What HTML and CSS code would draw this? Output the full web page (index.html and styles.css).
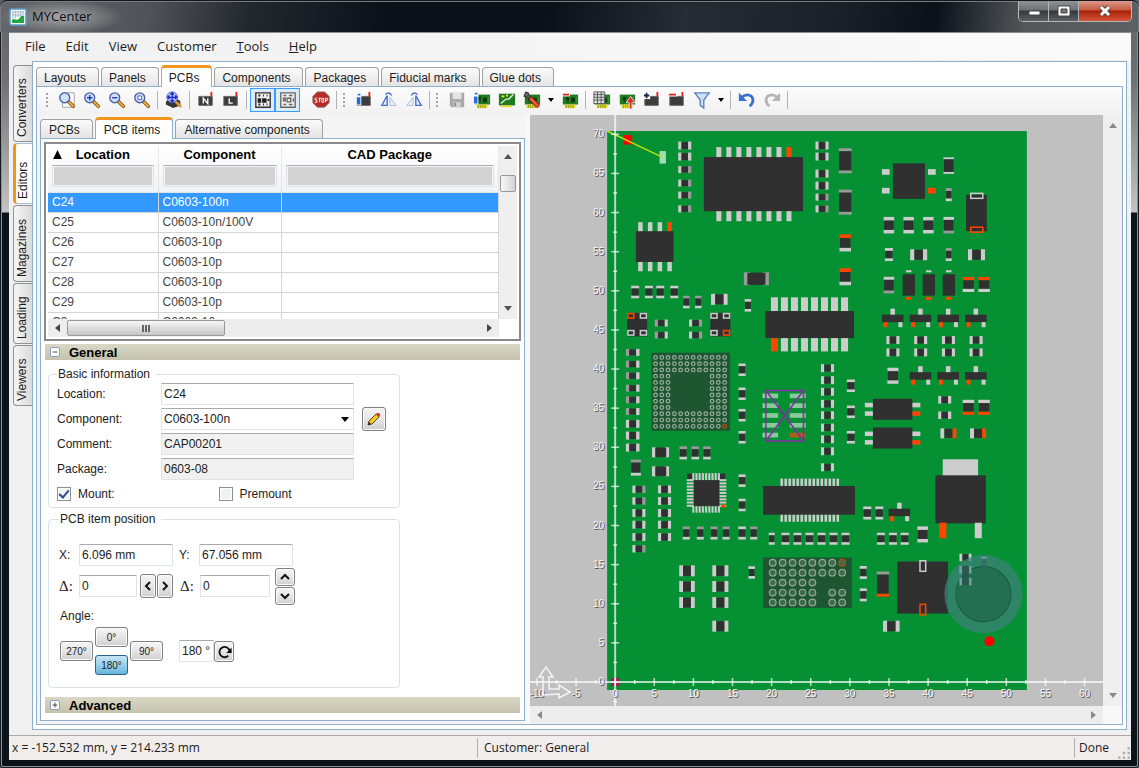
FILE: index.html
```html
<!DOCTYPE html>
<html lang="en">
<head>
<meta charset="utf-8">
<title>MYCenter</title>
<link rel="stylesheet" href="styles.css">
</head>
<body>
<svg class="defs" aria-hidden="true">
  <defs>
    <symbol id="lens" viewBox="0 0 20 20">
      <path d="M11 11l6 6" stroke="#8a5a10" stroke-width="4" stroke-linecap="round"/>
      <path d="M11 11l6 6" stroke="#f0b040" stroke-width="2" stroke-linecap="round"/>
      <circle cx="7.500" cy="7.500" r="5.500" fill="#cfe2fb" stroke="#4a5fa8" stroke-width="1.500"/>
    </symbol>
    <symbol id="chip" viewBox="0 0 20 20">
      <path d="M2 6h15v10H2z" fill="#3c3c3c"/>
      <path d="M2 6h15v10H2z" fill="none" stroke="#666"/>
      <path d="M15 1h2v5h-2z" fill="#f01818"/>
    </symbol>
    <symbol id="card" viewBox="0 0 20 20">
      <path d="M2 4h17v11H2z" fill="#1d7a1d"/>
      <path d="M4 15h12v4H4z" fill="#e8d820"/>
      <path d="M6 15v4M8.500 15v4M11 15v4M13.500 15v4" stroke="#8a9a20"/>
      <path d="M6 7h3v3H6zM11 8h4v4h-4zM6 12h3" fill="#0a3a10" stroke="#0a3a10"/>
      <path d="M17 6v7M10 7v5" stroke="#4aa03a"/>
    </symbol>
  </defs>
</svg>
<div class="window">
  <header class="titlebar">
    <svg class="app-icon" viewBox="0 0 18 18"><rect x="1" y="1" width="16" height="16" rx="1" fill="#f4f8fb" stroke="#5a9ac8" stroke-width="1.500"/><path d="M4 3v9M6.500 3v7M9 3v6M11.500 3v5M14 3v4M3 4h12M3 7h12" stroke="#a8bccb"/><path d="M3 15v-3l3-1 1 1 3-1 2-3h3v7z" fill="#22a83a"/></svg>
    <h1 class="title">MYCenter</h1>
    <div class="caption">
      <button class="cap" aria-label="Minimize"><svg viewBox="0 0 14 12"><rect x="2" y="6" width="11" height="4" fill="#fff" stroke="#444"/></svg></button>
      <button class="cap" aria-label="Maximize"><svg viewBox="0 0 14 12"><path d="M1 1h12v10H1z" fill="#fff" stroke="#444"/><path d="M4 4h6v4H4z" fill="#777" stroke="#444"/></svg></button>
      <button class="cap close" aria-label="Close"><svg viewBox="0 0 14 12"><path d="M3 2l8 8M11 2l-8 8" stroke="#543" stroke-width="5"/><path d="M3 2l8 8M11 2l-8 8" stroke="#fff" stroke-width="3"/></svg></button>
    </div>
  </header>
  <div class="client">
    <nav class="menu">
      <button>File</button><button>Edit</button><button>View</button><button>Customer</button><button><u>T</u>ools</button><button><u>H</u>elp</button>
    </nav>
    <div class="main">
      <nav class="vtabs">
        <button class="v-long">Converters</button>
        <button class="v-short active">Editors</button>
        <button class="v-long">Magazines</button>
        <button class="v-short">Loading</button>
        <button class="v-short">Viewers</button>
      </nav>
      <section class="outer">
        <nav class="tabs">
          <button>Layouts</button><button>Panels</button><button class="active">PCBs</button><button>Components</button><button>Packages</button><button>Fiducial marks</button><button>Glue dots</button>
        </nav>
        <div class="inner">
          <div class="toolbar">
            <i class="grip"></i>
            <button aria-label="Zoom to page"><svg viewBox="0 0 20 20"><path d="M5 2h13v16H5z" fill="#fff" stroke="#999"/><use href="#lens"/></svg></button>
            <button aria-label="Zoom in"><svg viewBox="0 0 20 20"><use href="#lens"/><path d="M4.500 7.500h6M7.500 4.500v6" stroke="#2233cc" stroke-width="1.500"/></svg></button>
            <button aria-label="Zoom out"><svg viewBox="0 0 20 20"><use href="#lens"/><path d="M4.500 7.500h6" stroke="#2233cc" stroke-width="1.500"/></svg></button>
            <button aria-label="Zoom selection"><svg viewBox="0 0 20 20"><use href="#lens"/><path d="M5.500 5.500h4v4h-4z" fill="#fff" stroke="#4455cc"/></svg></button>
            <i class="sep"></i>
            <button aria-label="Find item"><svg viewBox="0 0 20 20"><path d="M1 12l7-6 9 5v5l-8 3-8-4z" fill="#333"/><path d="M12 12l5 5" stroke="#d8963a" stroke-width="3" stroke-linecap="round"/><circle cx="8" cy="7" r="6" fill="#b8ccf4" stroke="#5058a0"/><path d="M3 7h10M8 2v10M5 5L3 7l2 2M11 5l2 2-2 2M6 4l2-2 2 2M6 10l2 2 2-2" fill="none" stroke="#1a28d8" stroke-width="1.500"/></svg></button>
            <i class="sep"></i>
            <button aria-label="N"><svg viewBox="0 0 20 20"><use href="#chip"/><path d="M7 14V8l5 6V8" fill="none" stroke="#fff" stroke-width="1.500"/></svg></button>
            <button aria-label="L"><svg viewBox="0 0 20 20"><use href="#chip"/><path d="M8 8v5.500h4" fill="none" stroke="#fff" stroke-width="1.500"/></svg></button>
            <i class="sep"></i>
            <button class="on" aria-label="Show components"><svg viewBox="0 0 20 20"><path d="M2 2h16v16H2z" fill="#eee" stroke="#333" stroke-width="1.500"/><path d="M5 5h2M10 5h1M14 5h1M5 9h2v3H5zM10 9h3v3h-3zM5 15h2M10 15h1M14 15h1M16 9v2" stroke="#222" stroke-width="2" fill="#222"/></svg></button>
            <button class="on" aria-label="Show outlines"><svg viewBox="0 0 20 20"><path d="M2 2h16v16H2z" fill="#eee" stroke="#666" stroke-width="1.500"/><path d="M5 5h3M11 5h4M5 8h2v3H5zM9 8h4v4H9zM5 15h3M11 15h4M16 8v4" stroke="#666" fill="none" stroke-width="1.500"/></svg></button>
            <i class="space"></i>
            <button aria-label="Stop"><svg viewBox="0 0 20 20"><path d="M6 1h8l5 5v7l-5 5H6l-5-5V6z" fill="#b82a26" stroke="#8a6a68"/><path d="M5.500 8H3.500v2h2v2.500H3M7 8h3M8.500 8v4.500M11 8h2v4.500h-2zM15 12.500V8h2v2.500h-2" fill="none" stroke="#fff"/></svg></button>
            <i class="sep"></i><i class="grip"></i>
            <button aria-label="Item info"><svg viewBox="0 0 20 20"><use href="#chip"/><path d="M1 3h6v13H1z" fill="#fff"/><path d="M3 3h3v2H3zM2 7h4v8H2z" fill="#2a6ae0"/></svg></button>
            <button aria-label="Rotate left"><svg viewBox="0 0 20 20"><path d="M8 5v11H2z" fill="#e8effa" stroke="#4a6cd0" stroke-width="1.500"/><path d="M11 7v9h7z" fill="#e8effa" stroke="#a4bcdc"/><path d="M6 4q4-4 7 1" fill="none" stroke="#5070cc" stroke-width="1.500"/></svg></button>
            <button aria-label="Rotate right"><svg viewBox="0 0 20 20"><path d="M9 7v9H2z" fill="#e8effa" stroke="#a4bcdc"/><path d="M12 5v11h6z" fill="#e8effa" stroke="#4a6cd0" stroke-width="1.500"/><path d="M7 5q3-5 7-1" fill="none" stroke="#5070cc" stroke-width="1.500"/></svg></button>
            <i class="sep"></i><i class="grip"></i>
            <button aria-label="Save"><svg viewBox="0 0 20 20"><path d="M2 2h16v16H4l-2-2z" fill="#a8a8a8"/><path d="M5 2h10v7H5z" fill="#e4e4e4"/><path d="M6 12h8v6H6z" fill="#d0d0d0"/><path d="M7 13h2v4H7z" fill="#888"/></svg></button>
            <button aria-label="Board info"><svg viewBox="0 0 20 20"><use href="#card"/><path d="M0 1h6v14H0z" fill="#fff"/><path d="M2 2h3v2H2zM1 6h4v8H1z" fill="#2a6ae0"/></svg></button>
            <button aria-label="Edit board"><svg viewBox="0 0 20 20"><path d="M1 3h18v13H1z" fill="#1d7a1d"/><path d="M3 16h12v2H3z" fill="#e8d820"/><path d="M3 14l6-5h3l5-5" stroke="#e8f4e0" stroke-width="1.500" fill="none"/><path d="M4 5h3v2H4zM9 4h2v2H9z" fill="#f4e83a"/></svg></button>
            <button aria-label="Board tools"><svg viewBox="0 0 20 20"><use href="#card"/><path d="M3 1l3 1 1 4 4 3-2 2-4-4-4-1z" fill="#666" stroke="#222"/><path d="M9 9l7 7" stroke="#a82010" stroke-width="5" stroke-linecap="round"/><path d="M9 9l7 7" stroke="#f06040" stroke-width="2.500" stroke-linecap="round"/></svg></button>
            <button class="drop" aria-label="More board tools"><svg viewBox="0 0 8 6"><path d="M1 1h6L4 5z"/></svg></button>
            <button aria-label="Remove board"><svg viewBox="0 0 20 20"><use href="#card"/><path d="M1 2h9v4H1z" fill="#fff"/><path d="M2 3h7v2H2z" fill="#e82020"/></svg></button>
            <i class="sep"></i>
            <button aria-label="Board list"><svg viewBox="0 0 20 20"><use href="#card"/><path d="M1 1h12v13H1z" fill="#ddd" stroke="#555"/><path d="M1 4h12M1 7h12M1 10h12M5 1v13M9 1v13" stroke="#555"/></svg></button>
            <button aria-label="Export board"><svg viewBox="0 0 20 20"><use href="#card"/><path d="M12.500 20v-7H9l5-7 5 7h-3.500v7z" fill="#e82828" stroke="#fff" stroke-width=".8"/></svg></button>
            <button aria-label="Add item"><svg viewBox="0 0 20 20"><use href="#chip"/><path d="M0 1h8v8H0z" fill="#fff"/><path d="M1 5h6M4 2v6" stroke="#14284a" stroke-width="2"/></svg></button>
            <button aria-label="Remove item"><svg viewBox="0 0 20 20"><use href="#chip"/><path d="M1 2h9v4H1z" fill="#fff"/><path d="M1 3h8v2H1z" fill="#e82020"/></svg></button>
            <button aria-label="Filter"><svg viewBox="0 0 20 20"><path d="M2 2h16l-6 8v9l-4-3v-6z" fill="#cfe0f6" stroke="#5a82c0" stroke-width="1.500"/></svg></button>
            <button class="drop" aria-label="Filter options"><svg viewBox="0 0 8 6"><path d="M1 1h6L4 5z"/></svg></button>
            <i class="sep"></i>
            <button aria-label="Undo"><svg viewBox="0 0 20 20"><path d="M4 7q6-5 11-1 4 5-2 11" fill="none" stroke="#3a6ed0" stroke-width="3"/><path d="M1 2v9h9z" fill="#3a6ed0"/></svg></button>
            <button aria-label="Redo"><svg viewBox="0 0 20 20"><path d="M16 7Q10 2 5 6q-4 5 2 11" fill="none" stroke="#b4b4b4" stroke-width="3"/><path d="M19 2v9h-9z" fill="#b4b4b4"/></svg></button>
            <i class="sep"></i>
          </div>
          <div class="split">
            <div class="left">
              <nav class="tabs sub">
                <button>PCBs</button><button class="active">PCB items</button><button>Alternative components</button>
              </nav>
              <div class="pane">
                <div class="grid">
                  <div class="grid-row">
                    <div class="grid-view">
                      <table>
                        <colgroup><col class="c-loc"><col class="c-comp"><col></colgroup>
                        <thead>
                          <tr><th><svg class="sort" viewBox="0 0 10 10"><path d="M5 1l4 8H1z"/></svg>Location</th><th>Component</th><th>CAD Package</th></tr>
                          <tr class="filters"><td><input aria-label="Filter location"></td><td><input aria-label="Filter component"></td><td><input aria-label="Filter CAD package"></td></tr>
                        </thead>
                        <tbody>
                          <tr class="selected"><td>C24</td><td>C0603-100n</td><td></td></tr>
                          <tr><td>C25</td><td>C0603-10n/100V</td><td></td></tr>
                          <tr><td>C26</td><td>C0603-10p</td><td></td></tr>
                          <tr><td>C27</td><td>C0603-10p</td><td></td></tr>
                          <tr><td>C28</td><td>C0603-10p</td><td></td></tr>
                          <tr><td>C29</td><td>C0603-10p</td><td></td></tr>
                          <tr><td>C3</td><td>C0603-10p</td><td></td></tr>
                        </tbody>
                      </table>
                    </div>
                    <div class="vscroll"><svg viewBox="0 0 8 5"><path d="M4 0l4 5H0z"/></svg><span class="thumb"></span><svg viewBox="0 0 8 5"><path d="M4 5L0 0h8z"/></svg></div>
                  </div>
                  <div class="hscroll"><svg viewBox="0 0 5 8"><path d="M0 4l5-4v8z"/></svg><span class="thumb"><i></i></span><svg viewBox="0 0 5 8"><path d="M5 4L0 0v8z"/></svg></div>
                </div>
                <h2 class="bar"><button aria-label="Collapse General"><svg viewBox="0 0 10 10"><path d="M2 5h6"/></svg></button>General</h2>
                <div class="sections">
                <fieldset>
                  <legend>Basic information</legend>
                  <div class="form">
                    <label for="loc">Location:</label><input id="loc" value="C24">
                    <label for="comp">Component:</label><span class="select"><select id="comp"><option>C0603-100n</option></select></span>
                    <button class="btn edit" aria-label="Edit component"><svg viewBox="0 0 16 16"><path d="M2 14l1-4 7-7 3 3-7 7z" fill="#f0c828" stroke="#5a4a10"/><path d="M2 14l1-3 2 2z" fill="#222"/><path d="M10 3l1-1h2l1 1v2l-1 1z" fill="#e03838"/></svg></button>
                    <label for="comm">Comment:</label><input id="comm" value="CAP00201" readonly>
                    <label for="pack">Package:</label><input id="pack" value="0603-08" readonly>
                    <div class="checks">
                      <label><input type="checkbox" checked>Mount:</label>
                      <label><input type="checkbox">Premount</label>
                    </div>
                  </div>
                </fieldset>
                <fieldset class="position">
                  <legend>PCB item position</legend>
                  <div class="coords">
                    <label for="px">X:</label><input id="px" value="6.096 mm">
                    <label for="py">Y:</label><input id="py" value="67.056 mm">
                  </div>
                  <div class="coords steps">
                    <label class="delta" for="dx">Δ:</label><input id="dx" value="0">
                    <div class="pair">
                      <button class="btn" aria-label="Step left"><svg viewBox="0 0 10 10"><path d="M7 1L3 5l4 4"/></svg></button><button class="btn" aria-label="Step right"><svg viewBox="0 0 10 10"><path d="M3 1l4 4-4 4"/></svg></button>
                    </div>
                    <label class="delta" for="dy">Δ:</label><input id="dy" value="0" class="dy">
                    <div class="stack">
                      <button class="btn" aria-label="Step up"><svg viewBox="0 0 10 10"><path d="M1 7l4-4 4 4"/></svg></button><button class="btn" aria-label="Step down"><svg viewBox="0 0 10 10"><path d="M1 3l4 4 4-4"/></svg></button>
                    </div>
                  </div>
                  <label class="angle-label" for="ang">Angle:</label>
                  <div class="angle">
                    <div class="dial">
                      <button class="btn n">0°</button><button class="btn w">270°</button><button class="btn e">90°</button><button class="btn s">180°</button>
                    </div>
                    <input id="ang" value="180 °">
                    <button class="btn rotate" aria-label="Rotate"><svg viewBox="0 0 16 16"><path d="M12 12.500a5.500 5.500 0 1 1 1.500-5" fill="none" stroke="#111" stroke-width="2"/><path d="M15.500 4v5.500H10z"/></svg></button>
                  </div>
                </fieldset>
                </div>
                <h2 class="bar"><button aria-label="Expand Advanced"><svg viewBox="0 0 10 10"><path d="M2 5h6M5 2v6"/></svg></button>Advanced</h2>
              </div>
            </div>
            <div class="board">
              <div class="board-row">
                <svg id="pcb" class="pcb" viewBox="530 115 572 590" preserveAspectRatio="xMinYMin meet" role="img" aria-label="PCB layout"></svg>
                <div class="vscroll flat"><svg viewBox="0 0 8 5"><path d="M4 0l4 5H0z"/></svg><svg viewBox="0 0 8 5"><path d="M4 5L0 0h8z"/></svg></div>
              </div>
              <div class="hscroll flat"><svg viewBox="0 0 5 8"><path d="M0 4l5-4v8z"/></svg><svg viewBox="0 0 5 8"><path d="M5 4L0 0v8z"/></svg></div>
            </div>
          </div>
        </div>
      </section>
    </div>
    <footer class="status">
      <span class="st-pos">x = -152.532 mm, y = 214.233 mm</span>
      <span class="st-cust">Customer: General</span>
      <span class="st-done">Done</span>
      <svg viewBox="0 0 12 12"><path d="M9 1h2v2H9zM5 5h2v2H5zM9 5h2v2H9zM1 9h2v2H1zM5 9h2v2H5zM9 9h2v2H9z" fill="#aaa"/></svg>
    </footer>
  </div>
</div>
<script src="board.js"></script>
</body>
</html>
```

FILE: styles.css
```css
* { box-sizing: border-box; }
body { margin: 0; font: 12px "Liberation Sans", sans-serif; color: #1c1c1c; background: #56636e; }
button, input, select { font: inherit; color: inherit; margin: 0; }
button { padding: 0; border: 0; background: none; }
.defs { position: absolute; width: 0; height: 0; }

.window {
  min-height: 100vh; display: flex; flex-direction: column; padding: 0 8px 8px 9px;
  border-radius: 7px 7px 3px 3px; box-shadow: inset 0 0 0 1px #151a1f, inset 0 0 0 2px #8d9296;
  background: linear-gradient(180deg, #5f6265 0, #6e7073 80px, #c4c4c6 212px, #0b131b 213px, #0b131b 100%);
}
.titlebar {
  display: flex; align-items: center; height: 32px; margin: 0 -8px 0 -9px; padding: 0 7px 0 9px; border-radius: 7px 7px 0 0;
  border-top: 1px solid #14181c; box-shadow: inset 0 1px #777b80, inset 1px 0 #777b80, inset -1px 0 #777b80;
  background: radial-gradient(ellipse 62px 17px at 62px 16px, #a3a5a7, transparent), linear-gradient(97deg, #63666a 0, #505357 13%, #23282e 22%, #0b1119 34%, #0b1119 48%, #252c34 60%, #1a2129 73%, #0b1119 82%, #53575a 90%, #5d6164 100%);
}
.app-icon { width: 18px; height: 18px; }
.title { margin: 0 0 2px 5px; font: 13px "Open Sans", sans-serif; color: #101010; }
.caption { display: flex; align-self: flex-start; margin-left: auto; border: 1px solid #b4b6b8; border-top: 0; border-radius: 0 0 5px 5px; overflow: hidden; }
.cap { width: 30px; height: 20px; border-right: 1px solid #b4b6b8; background: linear-gradient(#8f9396, #6e7275 45%, #34383d 50%, #5c6165); }
.cap svg { width: 14px; height: 12px; display: block; margin: auto; }
.cap.close { width: 52px; border: 0; background: linear-gradient(#dc9a8a, #c65a42 45%, #a82208 50%, #d4553a); }

.client { flex: 1; display: flex; flex-direction: column; background: #f0f0f0; border-top: 1px solid #8a8d90; }
.menu { display: flex; gap: 20px; height: 27px; align-items: center; padding: 0 0 2px 16px; font: 13px "Open Sans", sans-serif; background: linear-gradient(90deg, #f1f1f1, #fafafa); }
.main { flex: 1; display: flex; padding: 1px 4px 5px; }
.vtabs { width: 19px; padding-top: 4px; display: flex; flex-direction: column; gap: 1px; }
.vtabs button { writing-mode: vertical-rl; transform: rotate(180deg); width: 19px; text-align: left; padding: 4px 0 4px 3px; border: 1px solid #8f9296; border-left: 0; border-radius: 0 4px 4px 0; background: linear-gradient(90deg, #dadada, #f6f6f6); }
.vtabs .v-long { height: 77px; }
.vtabs .v-short { height: 61px; }
.vtabs .active { background: #fff; border-color: #a7bfd5; border-right: 3px solid #f0951f; }

.outer { flex: 1; min-width: 0; display: flex; flex-direction: column; padding: 4px 3px; border: 1px solid #8fb0cc; background: #fff; }
.tabs { display: flex; gap: 2px; align-items: flex-end; height: 20px; }
.tabs button { height: 19px; padding: 2px 12px 0 7px; white-space: nowrap; border: 1px solid #a0a0a0; border-bottom: 0; border-radius: 4px 4px 0 0; background: linear-gradient(#fbfbfb, #e4e4e4); }
.tabs .active { height: 22px; padding-top: 0; position: relative; margin-bottom: -1px; border-color: #8fb0cc; border-top: 3px solid #f0951f; background: #fff; }
.inner { flex: 1; display: flex; flex-direction: column; border: 1px solid #8fb0cc; background: #f8f8f8; }

.toolbar { display: flex; align-items: center; height: 28px; padding: 0 0 2px 6px; background: linear-gradient(#fcfcfc, #f1f1f1); }
.toolbar button { width: 25px; height: 24px; display: grid; place-items: center; }
.toolbar button svg { width: 18px; height: 18px; }
.toolbar .on { border: 1px solid #3b9cff; background: #dcebfa; }
.toolbar .drop { width: 13px; }
.toolbar .drop svg { width: 8px; height: 6px; }
.grip { width: 11px; height: 16px; background: radial-gradient(circle at 4px 2px, #a4a4a4 1px, transparent 1px) 0 0 / 11px 4px; }
.sep { width: 7px; height: 18px; background: linear-gradient(#b4b4b4, #b4b4b4) 3px 0 / 1px 100% no-repeat; }
.space { width: 8px; }

.split { flex: 1; display: flex; gap: 5px; }
.left { width: 488px; padding: 1px 0 0 3px; display: flex; flex-direction: column; background: #f4f4f4; }
.sub { height: 22px; }
.sub button { padding: 2px 12px 0 8px; }
.sub .active { padding: 0 12px 0 8px; }
.pane { flex: 1; padding: 3px; border: 1px solid #8fb0cc; margin-bottom: 3px; background: #fff; }

.grid { border: 2px solid #8a8a8a; padding: 2px; height: 199px; display: flex; flex-direction: column; background: #fff; }
.grid-row { flex: 1; min-height: 0; display: flex; }
.grid-view { flex: 1; overflow: hidden; }
table { width: 100%; border-collapse: collapse; table-layout: fixed; color: #444; }
.c-loc { width: 110px; }
.c-comp { width: 123px; }
thead { background: linear-gradient(#fff, #f1f2f6); }
th { height: 18px; padding: 0 0 2px; font-size: 13px; color: #000; position: relative; border-right: 1px solid #e6e9ee; }
.sort { position: absolute; left: 4px; top: 3px; width: 11px; height: 11px; }
td { height: 20px; padding: 0 4px; border-right: 1px solid #d4d4d4; border-bottom: 1px solid #d4d4d4; }
.filters td { height: 28px; padding: 0 4px 4px; border-color: #e4e4e4; }
.filters input { width: 100%; height: 22px; display: block; border: 1px solid #dfe3ea; border-top-color: #b0b0b4; background: #d2d2d2; box-shadow: inset 0 0 0 1px #f4f4f4; }
.selected { background: #3399ff; color: #fff; }

.vscroll { width: 18px; display: flex; flex-direction: column; align-items: center; justify-content: space-between; padding: 8px 0; background: #efefef; fill: #555; }
.vscroll svg { width: 8px; height: 5px; }
.vscroll .thumb { width: 16px; height: 17px; margin: 16px 0 auto; border: 1px solid #999; border-radius: 2px; background: linear-gradient(90deg, #f8f8f8, #d2d2d4); }
.hscroll { height: 18px; margin-right: 18px; display: flex; align-items: center; justify-content: space-between; padding: 0 7px; background: #ededed; fill: #444; }
.hscroll svg { width: 5px; height: 8px; }
.hscroll .thumb { width: 158px; height: 16px; margin: 0 auto 0 7px; display: grid; place-items: center; border: 1px solid #999; border-radius: 2px; background: linear-gradient(#f6f6f6, #dedede 50%, #c6c6c8); }
.thumb i { width: 9px; height: 7px; background: repeating-linear-gradient(90deg, #666 0 2px, transparent 2px 3px); }
.flat { fill: #888; }

.bar { display: flex; align-items: center; gap: 9px; height: 16px; margin: 3px 1px 0; padding-left: 5px; font-size: 13px; color: #000; background: linear-gradient(#d9d8c6, #c4c2ac); }
.bar button { width: 10px; height: 10px; border: 1px solid #88a4bc; border-radius: 2px; background: #fff; display: grid; }
.bar svg { stroke: #222; stroke-width: 1; width: 8px; height: 8px; }
.sections { padding: 7px 0 2px 4px; }
fieldset { width: 352px; margin: 0 0 4px; padding: 2px 8px 2px; border: 1px solid #d8e2ea; border-radius: 4px; }
legend { padding: 0 6px 0 1px; line-height: 14px; }
.form { display: grid; grid-template-columns: 102px 193px 24px; column-gap: 2px; row-gap: 3px; grid-auto-rows: 22px; align-items: center; }
.form label { grid-column: 1; }
fieldset input:not([type]), select { width: 100%; height: 22px; padding: 0 2px; border: 1px solid #e0e4ea; border-top-color: #a9abb2; border-radius: 1px; background: #fff; }
fieldset input:not([type])[readonly] { background: #f1f1f1; }
.select { position: relative; }
.select select { appearance: none; display: block; }
.select::after { content: ""; position: absolute; right: 5px; top: 9px; border: 4px solid transparent; border-top: 5px solid #000; border-bottom: 0; }
.btn { display: grid; place-items: center; border: 1px solid #808080; border-radius: 3px; background: linear-gradient(#f4f4f4, #e6e6e6 50%, #cfcfcf); box-shadow: inset 0 0 0 1px #fafafa; }
.edit { width: 24px; height: 24px; margin-left: 6px; }
.edit svg { width: 16px; height: 16px; }
.checks { grid-column: 1 / -1; display: flex; }
.checks label { width: 164px; display: flex; align-items: center; gap: 7px; }
.checks input { appearance: none; width: 14px; height: 14px; border: 1px solid #8e8f8f; background: #f0f2f4; box-shadow: inset 0 0 0 1px #fff; display: grid; place-items: center; }
.checks input:checked::after { content: ""; width: 4px; height: 8px; margin-top: -2px; border: solid #2e4a90; border-width: 0 2px 2px 0; transform: rotate(40deg); }

.position { padding: 18px 8px 12px 10px; }
.coords { display: flex; align-items: center; gap: 5px; }
.coords input { width: 94px !important; }
.coords label { width: 15px; }
.coords input + label { margin-left: 1px; }
.steps { height: 36px; margin-top: 2px; }
.steps input { width: 58px !important; }
.steps input.dy { width: 70px !important; }
.delta { font: 15px "Liberation Serif", serif; }
.pair { display: flex; gap: 1px; width: 33px; margin-left: -2px; }
.pair + label { margin-left: 2px; }
.pair .btn { width: 16px; height: 24px; }
.stack { display: grid; gap: 1px; }
.stack .btn { width: 20px; height: 18px; }
.coords svg { width: 10px; height: 10px; fill: none; stroke: #111; stroke-width: 2; }
.angle-label { display: block; margin: 5px 0 4px 1px; line-height: 14px; }
.angle { display: flex; align-items: center; }
.dial { display: grid; grid-template-columns: 33px 33px 33px; column-gap: 2px; grid-template-rows: 14px 6px 8px 6px 14px; width: 119px; margin-left: 1px; font-size: 10px; }
.dial .n { grid-area: 1 / 2 / 3 / 3; }
.dial .w { grid-area: 2 / 1 / 5 / 2; }
.dial .e { grid-area: 2 / 3 / 5 / 4; }
.dial .s { grid-area: 4 / 2 / 6 / 3; background: linear-gradient(#c6e4f4, #98d1ef 50%, #66b4dc); border-color: #2c628b; box-shadow: none; }
#ang { width: 35px; }
.rotate { width: 20px; height: 21px; }
.rotate svg { width: 15px; height: 15px; }

.board { flex: 1; min-width: 0; display: flex; flex-direction: column; }
.board-row { flex: 1; display: flex; min-height: 0; }
.pcb { flex: 1; min-width: 0; width: 0; background: #c0c0c0; }
.board .hscroll { background: #ededed; }
.board .vscroll { width: 19px; }
.board .hscroll { margin-right: 19px; }

.status { display: flex; align-items: center; height: 25px; border-top: 1px solid #a8a8a8; background: #f1edec; font: 12px "Open Sans", sans-serif; }
.status span { height: 20px; line-height: 20px; }
.st-pos { width: 468px; padding-left: 3px; }
.st-cust { flex: 1; padding-left: 6px; border-left: 1px solid #b0b0b0; }
.st-done { width: 43px; padding-left: 4px; border-left: 1px solid #b0b0b0; }
.status svg { width: 14px; height: 14px; align-self: flex-end; }

.axis { stroke: #fff; stroke-opacity: .7; stroke-width: 2; }
.axis-ticks { stroke: #fff; stroke-opacity: .7; stroke-width: 1.5; }
.scale, .scale-shade { font: 10px "Liberation Sans", sans-serif; fill: #f6f6f6; }
.scale-shade { fill: #555; }
```

FILE: board.js
```js
const BODY = '#303030', PAD = '#cccccc', DULL = '#9a9a9a', RED = '#ff4500';
const out = [];
const rect = (x, y, w, h, fill) => out.push(`<rect x="${x}" y="${y}" width="${w}" height="${h}" fill="${fill}"/>`);
const frame = (x, y, w, h, c) => out.push(`<rect x="${x}" y="${y}" width="${w}" height="${h}" fill="none" stroke="${c}" stroke-width="1.5"/>`);
const circle = (x, y, r, attrs) => out.push(`<circle cx="${x}" cy="${y}" r="${r}" ${attrs}/>`);

// Two-pad chips: pads on the left and right, or on the top and bottom.
function horizontal(xs, ys, w, h, a = PAD, b = PAD) {
  const p = w * 0.25;
  for (const x of xs) for (const y of ys) {
    rect(x - w / 2, y - h / 2, p, h, a);
    rect(x + w / 2 - p, y - h / 2, p, h, b);
    rect(x - w / 2 + p, y - h / 2 + 0.5, w - 2 * p, h - 1, BODY);
  }
}
function vertical(xs, ys, w, h, a = PAD, b = PAD, p = h * 0.22) {
  for (const x of xs) for (const y of ys) {
    rect(x - w / 2, y - h / 2, w, p, a);
    rect(x - w / 2, y + h / 2 - p, w, p, b);
    rect(x - w / 2 + 0.5, y - h / 2 + p, w - 1, h - 2 * p, BODY);
  }
}
function pins(x, y, n, step, w, h, redIndex = -1) {
  for (let i = 0; i < n; i++) rect(x + i * step, y, w, h, i === redIndex ? RED : PAD);
}

rect(607, 131, 419, 558, '#059033');

// Small passives
horizontal([684.5], [145.5, 156.5], 13, 8);
horizontal([684.5], [169.5, 183, 195, 208.7], 13, 7, PAD, DULL);
horizontal([821.5], [145.5, 156.5, 173.5, 185.5], 13, 8);
horizontal([821.5], [197, 208.7], 13, 7, PAD, DULL);
horizontal([756], [278.5], 25, 13, DULL, DULL);
rect(747, 272.5, 18, 12, BODY);
vertical([635, 648.7, 660, 674], [291.7], 8, 12.5);
vertical([686, 698], [301.7], 6.5, 12.5, DULL);
horizontal([719], [299], 16.5, 11);
vertical([747.5], [305], 6.5, 12.5);
horizontal([661], [322.7, 334.7], 13, 7, DULL, PAD);
horizontal([695.3], [322.7, 334.7], 13, 7, PAD, DULL);
vertical([844.7], [160.7, 202], 13, 25, DULL, DULL, 3);
vertical([844.7], [242.7, 276.5], 11.5, 17, RED, PAD);
vertical([948], [165.5], 10.5, 16.5, PAD, PAD, 2);
vertical([948], [194.5, 254.3], 6, 13, DULL, PAD);
vertical([888.3, 908, 927.7], [225], 10.5, 16.5);
vertical([948], [225], 10.5, 16.5, PAD, DULL, 3);
vertical([888.3], [254.3], 8, 13);
horizontal([918, 975.7], [254.5], 17, 11);
vertical([888.3], [284.8], 10.5, 16.5, PAD, DULL, 3);
vertical([967.7, 983.3], [284.2], 11.5, 15, RED, PAD);
horizontal([892.3, 920, 947.7, 975.3], [339.7, 352], 13, 8);
vertical([892.3], [375.3], 11, 16);
horizontal([827], [367.7, 379.7, 391.3, 403.3, 414.7, 427, 438.7, 450.7, 466.7], 13, 8);
vertical([850.3], [385.3, 411.3, 436.7], 8, 12.5);
horizontal([944], [399.3, 414.7], 13, 7.5);
vertical([967.7, 983.3], [406.8], 11.5, 15, PAD, RED);
horizontal([947.7, 977.3], [432.8], 16, 10, PAD, RED);
vertical([866.7, 878.7], [512.3], 8, 13);
vertical([922], [533.7], 10.5, 16);
vertical([880.3, 892.3, 904, 785, 797, 809, 821, 833, 845], [538], 8, 12);
vertical([771.3], [538], 6, 12);
horizontal([632.5], [352, 363.7, 375.3, 387.7, 399.3, 411], 13.5, 7, DULL, PAD);
horizontal([632.5], [423.3, 435, 447], 13.5, 8);
vertical([741.7], [369.3, 393.3, 414.7, 436.7, 480, 504.3], 7, 12.5);
horizontal([660.3], [451.7, 470.7], 17, 10);
rect(655, 447, 11, 9.5, BODY);
rect(655, 466, 11, 9.5, BODY);
vertical([683, 695, 706.7], [452.3], 7.5, 13, DULL, PAD);
vertical([635.7], [467], 10, 16, DULL, PAD, 3);
horizontal([638.7], [488.7, 500.3, 548], 13, 7.5, PAD, DULL);
horizontal([638.7], [512.3, 524, 536.3], 13, 8);
horizontal([664.3], [488.7, 500.3, 512.3, 524, 536.3], 13, 8);
vertical([686, 700, 713.7, 725.7, 753.3], [532.3], 7, 13, DULL, PAD);
vertical([741.7], [532.3], 7.5, 13);
horizontal([686.7], [570, 585.7, 601.7], 15.5, 11);
horizontal([720], [570, 585.7, 601.7, 625.3], 16, 11);
vertical([751.3], [571.7], 6.5, 12.5);
vertical([862.7], [571.7, 594], 7, 13);
vertical([882.3], [583.3], 12.5, 25, DULL, RED, 3);
horizontal([890.7], [625.3], 16.5, 11);
horizontal([964.7], [556.7, 569, 580.7], 12, 7.5);
vertical([983.3], [561.7], 6, 12);

// Large packages with pin rows
pins(716, 147, 8, 10, 5, 12, 7);
pins(716, 209, 8, 10, 5, 12);
rect(703.5, 157, 99, 54, BODY);
pins(638, 222, 4, 9.7, 4.5, 11, 3);
pins(638, 260, 4, 9.7, 4.5, 11);
rect(635.7, 231, 37.5, 30.7, BODY);
pins(770.5, 297, 8, 10, 7, 14);
pins(770.5, 337, 8, 10, 7, 14, 0);
rect(765, 310.7, 88.5, 27, BODY);
pins(780, 478, 15, 4, 2.5, 8);
pins(780, 513, 15, 4, 2.5, 8);
rect(762.7, 485.3, 91.7, 28.7, BODY);

// Four-corner packages
for (const [x, red] of [[627, 0], [710, 3]]) {
  rect(x, 312.5, 20, 23.5, BODY);
  [[0, 0], [12.5, 0], [0, 17], [12.5, 17]].forEach(([dx, dy], i) =>
    frame(x + dx + 0.7, 313.2 + dy, 6, 4.5, i === red ? RED : PAD));
}
pins(881.3, 169, 2, 46, 7.7, 5.7);
pins(881.3, 187.7, 2, 46, 7.7, 5.7, 1);
rect(892.3, 163.3, 32, 35.4, BODY);
rect(965.3, 194.7, 20.7, 36.3, BODY);
frame(970, 193.2, 12, 5, PAD);
frame(970, 227, 12, 5, RED);
for (const y of [398.3, 427]) {
  rect(864.3, y + 4, 9, 4.5, PAD);
  rect(864.3, y + 12.5, 9, 4.5, PAD);
  rect(911, y + 4, 8.7, 4.5, PAD);
  rect(911, y + 12.5, 8.7, 4.5, RED);
  rect(872.3, y, 39.4, 21, BODY);
}

// Transistors
for (const x of [902, 922, 942]) {
  rect(x, 274, 12.3, 21.3, BODY);
  rect(x + 3.3, 270, 5.5, 2, PAD);
  rect(x + 3.3, 296.5, 5.5, 3, RED);
}
for (const [x, y] of [[881.3, 314.3], [909, 314.3], [936.7, 314.3], [964.3, 314.3], [909, 371.7], [936.7, 371.7], [964.3, 371.7], [888, 508]]) {
  rect(x, y, 21.5, 7.5, BODY);
  rect(x + 8.5, y - 6, 4.5, 6, PAD);
  rect(x + 1.5, y + 7.5, 4, 5, RED);
  rect(x + 16.5, y + 7.5, 4, 5, PAD);
}
rect(942, 458.7, 35.3, 17, PAD);
rect(934.7, 474.7, 50.3, 48, BODY);
rect(938.7, 522, 7, 15.5, RED);
rect(974, 522, 7, 15.5, PAD);
rect(896.7, 560.7, 50.6, 52, BODY);
frame(919.3, 560, 5.7, 10.5, PAD);
frame(919.3, 603.5, 5.7, 10.5, RED);

// Ball grid arrays
rect(651.3, 352.3, 78.4, 78, '#1d5630');
for (let r = 0; r < 12; r++) for (let c = 0; c < 12; c++) {
  if (r > 2 && r < 9 && c > 2 && c < 9) continue;
  circle(655.3 + c * 6.27, 357 + r * 6.25, 1.8, `fill="none" stroke="${r === 11 && c === 11 ? '#c84a10' : '#9cae9f'}" stroke-width="1.2"`);
}
rect(762.7, 556.7, 88.6, 50.3, '#1d5630');
for (let r = 0; r < 5; r++) for (let c = 0; c < 8; c++) {
  if ((r > 1 && c === 5) || (r === 2 && c > 4)) continue;
  circle(772.3 + c * 9.9, 562 + r * 9.9, 3.3, `fill="#3f6b4d" stroke="${r === 0 && c === 7 ? '#b84a18' : '#95a798'}" stroke-width="1.2"`);
}

// Quad package
rect(687, 473, 6, 6, BODY);
rect(719, 473, 6, 6, BODY);
for (let i = 0; i < 9; i++) {
  const o = i * 3.2;
  rect(692 + o, 472.5, 2, 7, PAD);
  rect(692 + o, 505, 2, 7, PAD);
  rect(686.5, 478.5 + o, 7, 2, PAD);
  rect(719, 478.5 + o, 7, 2, PAD);
}
rect(693.5, 479.5, 25.5, 26, BODY);
rect(721, 504, 4, 3, RED);

// Unmounted connector
for (let i = 0; i < 5; i++) {
  rect(762, 393 + i * 9.8, 15.7, 4.7, '#88c89a');
  rect(789.3, 393 + i * 9.8, 16, 4.7, i === 4 ? '#b06018' : '#88c89a');
}
out.push('<path d="M765.500 390h37.500v50.500h-37.500zM765.500 390l37.500 50.500M803 390l-37.500 50.500" fill="none" stroke="#8a28a8" stroke-width="1.500"/>');

// Highlighted area, fiducials and the selected item
circle(982.7, 593.3, 39, 'fill="#3c8278" fill-opacity=".75"');
circle(982.7, 593.3, 27.5, 'fill="#206b4d" fill-opacity=".85" stroke="#165c40"');
horizontal([964.7], [569, 580.7], 12, 7.5, '#6ea49a', '#6ea49a');
rect(961.5, 565, 6.5, 19.5, '#28584f');
circle(988.7, 640.3, 5, 'fill="#ff0000"');
rect(659.3, 151, 6.4, 12.5, '#a4dcb2');
rect(623.5, 135, 8.5, 9.5, '#ff0000');
out.push('<path d="M607 131l55 26" stroke="#b8e010" stroke-width="1.500"/>');

// Rulers
const STEP = 39.05;
rect(611, 677, 8, 8, '#a01850');
out.push('<g class="axis"><path d="M615 115V705M530 681H1102"/></g><g class="axis-ticks">');
for (let i = -1; i <= 28; i++) {
  const y = 681 - i * STEP / 2, t = i % 2 ? 2 : 4;
  out.push(`<path d="M${615 - t} ${y}h${2 * t}"/>`);
}
for (let i = -4; i <= 24; i++) {
  const x = 615 + i * STEP / 2, t = i % 2 ? 2 : 4;
  out.push(`<path d="M${x} ${681 - t}v${2 * t}"/>`);
}
out.push('</g>');
for (const [cls, d] of [['scale-shade', 1], ['scale', 0]]) {
  out.push(`<g class="${cls}">`);
  for (let v = 0; v <= 70; v += 5) out.push(`<text x="${604 + d}" y="${684 + d - v / 5 * STEP}" text-anchor="end">${v}</text>`);
  for (let v = -10; v <= 60; v += 5) out.push(`<text x="${615 + d + v / 5 * STEP}" y="${696 + d}" text-anchor="middle">${v}</text>`);
  out.push('</g>');
}
out.push('<path d="M543 694v-18h-4l7-10 7 10h-4v12h10v-4l11 7-11 6v-4z" fill="none" stroke="#f4f4f4" stroke-width="1.500"/>');

document.getElementById('pcb').innerHTML = out.join('');
```
